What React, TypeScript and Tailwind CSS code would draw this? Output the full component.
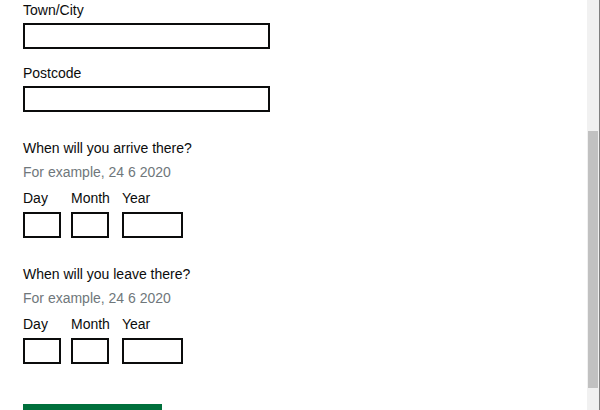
const font = { fontFamily: '"Liberation Sans", Arial, sans-serif' }

function TextInput({ label }: { label: string }) {
  return (
    <div className="flex flex-col">
      <label className="text-[14px] leading-[20px] text-[#0b0c0c]">{label}</label>
      <input type="text" className="mt-[3px] h-[26px] w-[247px] border-2 border-[#0b0c0c] bg-white outline-none" />
    </div>
  )
}

function DateField({ label }: { label: string }) {
  return (
    <div className="flex flex-col">
      <div className="text-[14px] leading-[20px] text-[#0b0c0c]">{label}</div>
      <div className="mt-[4px] text-[14px] leading-[20px] text-[#6f777b]">For example, 24 6 2020</div>
      <div className="mt-[6px] flex">
        <div className="mr-[10px] flex flex-col">
          <label className="text-[14px] leading-[20px] text-[#0b0c0c]">Day</label>
          <input type="text" className="mt-[4px] h-[26px] w-[38px] border-2 border-[#0b0c0c] bg-white outline-none" />
        </div>
        <div className="mr-[12px] flex flex-col">
          <label className="text-[14px] leading-[20px] text-[#0b0c0c]">Month</label>
          <input type="text" className="mt-[4px] h-[26px] w-[38px] border-2 border-[#0b0c0c] bg-white outline-none" />
        </div>
        <div className="flex flex-col">
          <label className="text-[14px] leading-[20px] text-[#0b0c0c]">Year</label>
          <input type="text" className="mt-[4px] h-[26px] w-[61px] border-2 border-[#0b0c0c] bg-white outline-none" />
        </div>
      </div>
    </div>
  )
}

export default function App() {
  return (
    <div className="flex h-[410px] w-[600px] overflow-hidden bg-white" style={font}>
      <div className="flex-1 overflow-hidden pl-[23px]">
        <div className="flex flex-col gap-[14px]">
          <TextInput label="Town/City" />
          <TextInput label="Postcode" />
        </div>

        <div className="mt-[26px] flex flex-col gap-[26px]">
          <DateField label="When will you arrive there?" />
          <DateField label="When will you leave there?" />
        </div>

        {/* submit button, only its top edge is above the fold */}
        <div aria-label="Continue" className="mt-[40px] h-[40px] w-[139px] bg-[#00703c] shadow-[0_2px_0_#002d18]" />
      </div>

      {/* scrollbar */}
      <div className="flex w-[12px] flex-col bg-[#f1f1f1] px-px">
        <div className="mt-[131px] h-[257px] bg-[#c1c1c1]" />
      </div>
      <div className="w-px bg-[#808080]" />
    </div>
  )
}
